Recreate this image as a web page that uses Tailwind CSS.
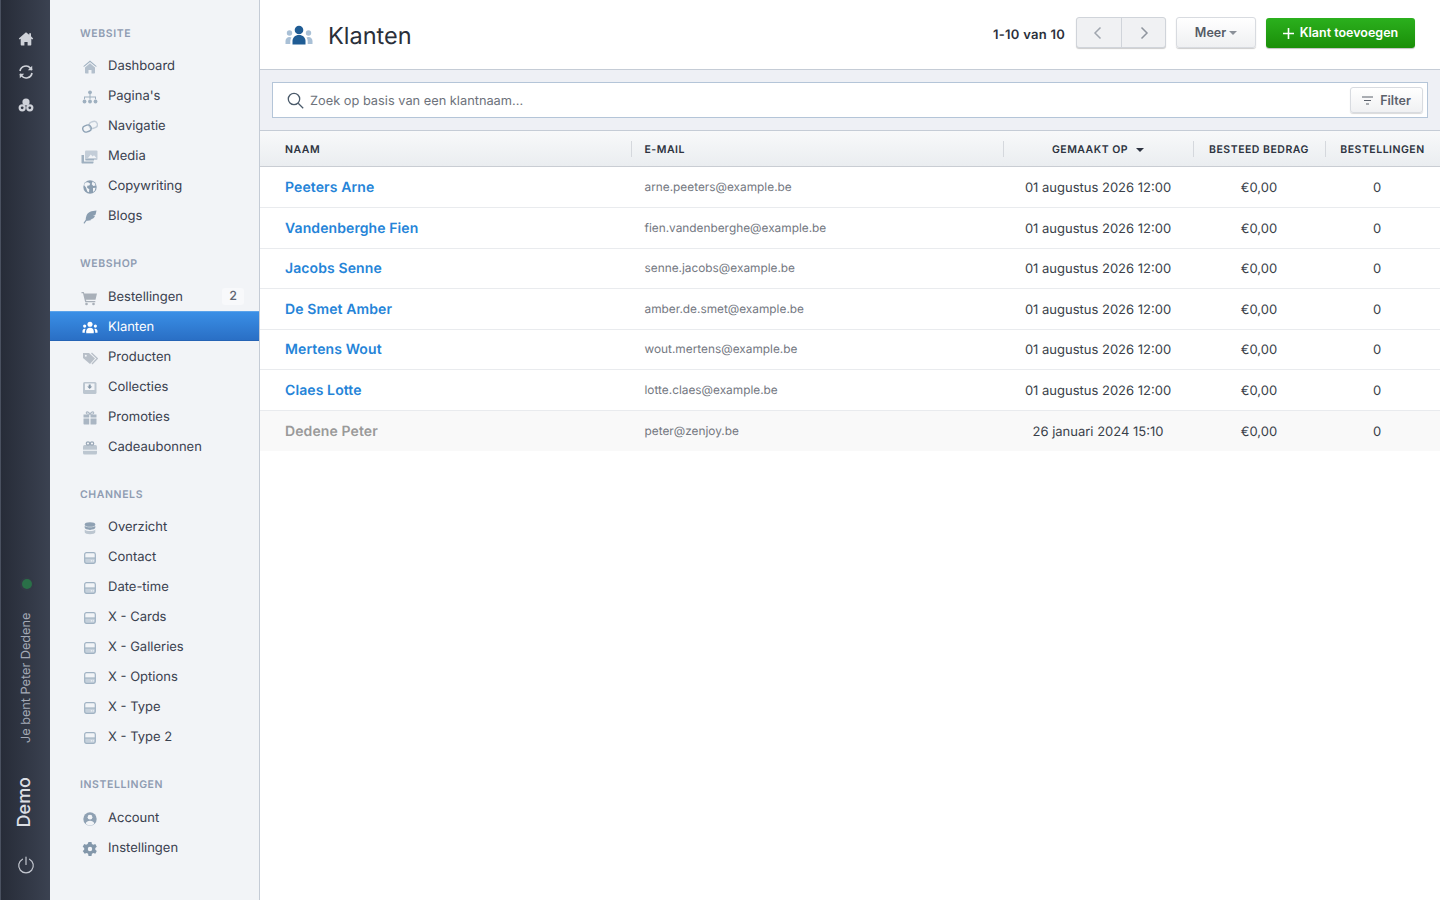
<!DOCTYPE html>
<html lang="nl">
<head>
    <meta charset="UTF-8">
    <meta name="viewport" content="width=device-width, initial-scale=1.0">
    <title>Klanten</title>
    <script src="https://cdn.jsdelivr.net/npm/@tailwindcss/browser@4"></script>
</head>
<body class="bg-white text-[#2d3748] font-['Inter',sans-serif] [text-rendering:geometricPrecision] h-[900px] w-[1440px] overflow-hidden flex">

<!-- iconen -->
<svg class="hidden">
    <symbol id="channel" viewBox="0 0 14 14">
        <rect x="1" y="7" width="12" height="6" fill="#c6d1dc"/>
        <rect x=".8" y=".8" width="12.400" height="12.400" rx="2" fill="none" stroke="#a0b2c3" stroke-width="1.400"/>
        <path d="M1 7h12" stroke="#a0b2c3" stroke-width="1.300"/>
        <rect x="8" y="9.500" width="1.200" height="1.600" fill="#f2f4f7"/>
        <rect x="10.200" y="9.500" width="1.200" height="1.600" fill="#f2f4f7"/>
    </symbol>
</svg>

<!-- RAIL -->
<div class="w-[50px] h-full flex flex-col items-center bg-gradient-to-r from-[#272c38] to-[#3b4251] border-l border-[#4a5160] shrink-0">
    <div class="flex flex-col items-center gap-[17px] pt-[31px] text-[#cfd2d9]">
        <svg class="w-4 h-4" viewBox="0 0 16 16" fill="currentColor"><path d="M8 1.200 .8 7.600l.9 1 1-.9v6.100c0 .4.3.7.7.7h3v-3.600h3.200v3.600h3c.4 0 .7-.3.7-.7V7.700l1 .9.9-1L13 5.300V2.200h-1.800v1.500z"/></svg>
        <svg class="w-4 h-4" viewBox="0 0 16 16" fill="none" stroke="currentColor" stroke-width="1.700"><path d="M2 7a6 6 0 0 1 10.500-2.800L14 5.800"/><path d="M14 9a6 6 0 0 1-10.500 2.800L2 10.200"/><path d="M14.200 1.800v4.400H9.800M1.800 14.200V9.800h4.400" fill="currentColor" stroke="none"/></svg>
        <svg class="w-4 h-4" viewBox="0 0 16 16" fill="currentColor"><circle cx="8" cy="5" r="3.600"/><circle cx="4.200" cy="10.800" r="3.600"/><circle cx="11.800" cy="10.800" r="3.600"/><circle cx="4.200" cy="10.800" r="1.400" fill="#343a47"/><circle cx="11.800" cy="10.800" r="1.400" fill="#343a47"/></svg>
    </div>
    <div class="flex-1"></div>
    <span class="w-[10px] h-[10px] rounded-full bg-[#2a7048] ring-2 ring-[#333a46] translate-x-px"></span>
    <div class="mt-[21px] h-[136px] flex justify-center text-[12.700px] leading-none text-[#a3a9b5] [writing-mode:vertical-rl] rotate-180 whitespace-nowrap translate-x-[2px]">Je bent Peter Dedene</div>
    <div class="mt-[31px] text-[18px] leading-none font-medium text-[#dcdfe4] [writing-mode:vertical-rl] rotate-180 -translate-x-px">Demo</div>
    <svg class="w-[18px] h-[18px] mt-[29px] mb-[26px] text-[#c3c7cf]" viewBox="0 0 18 18" fill="none" stroke="currentColor" stroke-width="1.200" stroke-linecap="round"><path d="M5.500 3.200a7.300 7.300 0 1 0 7 0"/><path d="M9 1v7.500"/></svg>
</div>

<!-- SIDEBAR -->
<aside class="w-[210px] h-full shrink-0 bg-[#f2f4f7] border-r border-[#c5ccd6] text-[13px] text-[#39404e]">
    <div class="h-[26px]"></div>
    <h3 class="h-[16px] leading-[16px] pl-[30px] text-[10.500px] font-semibold tracking-[0.6px] text-[#8f9cb2]">WEBSITE</h3>
    <ul class="mt-[8px] [&>li]:pt-[4px]">
        <li class="h-[30px] flex items-center"><span class="w-[58px] pl-[32px] flex"><svg class="w-4 h-4 text-[#9fb0c0]" viewBox="0 0 16 16"><path d="M8 1.500 1 7.500h1.500L8 3l5.500 4.500H15z" fill="currentColor"/><path d="M3 8.500 8 4.300l5 4.200v5.200c0 .4-.3.8-.8.800h-2.700V11h-3v3.500H3.800c-.5 0-.8-.4-.8-.8z" fill="#b4c0cd"/></svg></span>Dashboard</li>
        <li class="h-[30px] flex items-center"><span class="w-[58px] pl-[32px] flex"><svg class="w-4 h-4 text-[#9fb0c0]" viewBox="0 0 16 16" fill="currentColor"><circle cx="8" cy="3.300" r="1.900"/><circle cx="2.500" cy="12.500" r="1.900"/><circle cx="8" cy="12.500" r="1.900"/><circle cx="13.500" cy="12.500" r="1.900"/><path d="M7.500 5h1v2.500h5.500v2.800h-1V8.500H8.500v1.800h-1V8.500H3v1.800H2V7.500h5.500z"/></svg></span>Pagina's</li>
        <li class="h-[30px] flex items-center"><span class="w-[58px] pl-[32px] flex"><svg class="w-4 h-4 text-[#8fa3b6]" viewBox="0 0 16 16" fill="none" stroke="currentColor" stroke-width="1.400"><rect x="7" y="2.700" width="8.500" height="6.500" rx="3.250" transform="rotate(-20 11 6)" stroke="#c3cdd8"/><rect x=".7" y="6.300" width="8.500" height="6.500" rx="3.250" transform="rotate(-20 5 9.500)"/></svg></span>Navigatie</li>
        <li class="h-[30px] flex items-center"><span class="w-[58px] pl-[31px] flex"><svg class="w-[17px] h-4 text-[#9fb0c0]" viewBox="0 0 17 16" fill="currentColor"><rect x="4" y="1.500" width="12.500" height="9.500" rx="1" fill="#c3cdd8"/><path d="m7 9 2.800-3.500 1.800 2 1.400-1.300L15.500 9z" fill="#f2f4f7"/><path d="M.5 6h2.500v6.500h9.500v1c0 .6-.4 1-1 1h-10c-.6 0-1-.4-1-1zM4.500 10h8.500v1.500H4.500z"/></svg></span>Media</li>
        <li class="h-[30px] flex items-center"><span class="w-[58px] pl-[32px] flex"><svg class="w-4 h-4 text-[#8a9db0]" viewBox="0 0 16 16"><circle cx="8" cy="8" r="6.700" fill="currentColor"/><path d="M3.500 3.500 6 3.200l2.300 1.600-1 1.700-2 .2-.2 2 2.200 1.500-.3 3-1.700-.7-1.300-4L2 6zM10.500 2.500l2.300 1.700.8 2.300-2.300.4-1.600-1.600zM11 9l2.500-.3-.8 3-1.700 1.300z" fill="#f2f4f7"/></svg></span>Copywriting</li>
        <li class="h-[30px] flex items-center"><span class="w-[58px] pl-[32px] flex"><svg class="w-4 h-4 text-[#8a9db0]" viewBox="0 0 16 16" fill="currentColor"><path d="M14.500 1.500c-5 .3-8.500 1.500-10 5-.6 1.500-.8 3-.8 4.300L1.500 14l.8.700 2.300-3c1.500 0 3.500-.2 5.300-1l-1.800-.3 3-.9c1-.8 1.500-1.700 2-2.800l-2.200-.2 2.600-.8c.4-1.300.7-2.600 1-4.200z"/></svg></span>Blogs</li>
    </ul>

    <h3 class="mt-[26px] h-[16px] leading-[16px] pl-[30px] text-[10.500px] font-semibold tracking-[0.6px] text-[#8f9cb2]">WEBSHOP</h3>
    <ul class="mt-[9px] [&>li]:pt-[4px]">
        <li class="h-[30px] flex items-center"><span class="w-[58px] pl-[31px] flex"><svg class="w-4 h-4 text-[#a9b0b9]" viewBox="0 0 16 16" fill="currentColor"><path d="M.5 2h2.300l.5 1.500H16l-1.500 6.300H5l.3 1.200h9v1.300H4.200L2 3.300H.5z"/><circle cx="5.500" cy="14" r="1.300"/><circle cx="12.500" cy="14" r="1.300"/></svg></span>Bestellingen<span class="ml-auto mr-[15px] w-[22px] h-[17px] rounded-[3px] bg-[#f8f9fb] text-center text-[12.500px] leading-[17px] font-medium text-[#5f6673] -translate-y-[2px]">2</span></li>
        <li class="h-[30px] flex items-center text-white bg-gradient-to-b from-[#3a8fe6] to-[#2a6fc5] border-y border-[#2463b5] border-t-[#5ba3ea]"><span class="w-[58px] pl-[32px] flex"><svg class="w-4 h-4 text-white" viewBox="0 0 17 16" fill="currentColor"><circle cx="8.500" cy="4" r="2.700"/><path d="M4.500 13.500v-2c0-2 1.500-3.700 4-3.700s4 1.700 4 3.700v2z"/><circle cx="2.800" cy="6" r="1.700"/><circle cx="14.200" cy="6" r="1.700"/><path d="M.5 13v-1.800c0-1.300 1-2.400 2.300-2.400.4 0 .8.100 1 .2-.5.800-.8 1.600-.8 2.500V13zM16.500 13v-1.800c0-1.300-1-2.400-2.300-2.400-.4 0-.8.100-1 .2.500.8.800 1.600.8 2.500V13z"/></svg></span>Klanten</li>
        <li class="h-[30px] flex items-center"><span class="w-[58px] pl-[32px] flex"><svg class="w-4 h-4 text-[#a9b0b9]" viewBox="0 0 16 16"><path d="M1 3h6l6 5.500-5 5.500-7-6z" fill="#b8bfc8"/><path d="m9.500 3 5.800 5.500-5.300 5.500" fill="none" stroke="#b8bfc8" stroke-width="1.300"/><circle cx="3.800" cy="5.700" r="1" fill="#f2f4f7"/></svg></span>Producten</li>
        <li class="h-[30px] flex items-center"><span class="w-[58px] pl-[32px] flex"><svg class="w-4 h-4" viewBox="0 0 16 16"><rect x="1" y="2" width="13.500" height="12" rx="1.500" fill="#bcc6d0"/><rect x="3" y="3.500" width="9.500" height="6.500" fill="#f2f4f7"/><path d="M6.700 4.500h2v2h1.500L7.700 9 5.200 6.500h1.500z" fill="#8597a8"/></svg></span>Collecties</li>
        <li class="h-[30px] flex items-center"><span class="w-[58px] pl-[32px] flex"><svg class="w-4 h-4" viewBox="0 0 16 16" fill="#aab6c3"><path d="M1.500 8.500h5.700V14.500H2.500c-.6 0-1-.4-1-1zM8.500 8.500h6v5c0 .6-.4 1-1 1h-5zM1.500 4.500h5.700v3H1.500zM8.500 4.500h6v3h-6z"/><path d="M8 4.300C6.500 1 3.500 1.300 4.500 3.500c.3.500 2 .8 3.500.8zm0 0c1.500-3.300 4.500-3 3.500-.8-.3.500-2 .8-3.500.8z" fill="none" stroke="#aab6c3" stroke-width="1.100"/></svg></span>Promoties</li>
        <li class="h-[30px] flex items-center"><span class="w-[58px] pl-[32px] flex"><svg class="w-4 h-4" viewBox="0 0 16 16"><rect x="1" y="5" width="14" height="9.500" rx="1.500" fill="#bcc6d0"/><rect x="1" y="9.700" width="14" height="1.100" fill="#f2f4f7"/><circle cx="6" cy="3.500" r="1.700" fill="none" stroke="#9aa8b7" stroke-width="1.200"/><circle cx="10" cy="3.500" r="1.700" fill="none" stroke="#9aa8b7" stroke-width="1.200"/></svg></span>Cadeaubonnen</li>
    </ul>

    <h3 class="mt-[26px] h-[16px] leading-[16px] pl-[30px] text-[10.500px] font-semibold tracking-[0.6px] text-[#8f9cb2]">CHANNELS</h3>
    <ul class="mt-[8px] [&>li]:pt-[4px]">
        <li class="h-[30px] flex items-center"><span class="w-[58px] pl-[34px] flex"><svg class="w-[12px] h-[13px] text-[#8fa1b3]" viewBox="0 0 14 16" fill="currentColor"><ellipse cx="7" cy="3" rx="6.500" ry="2.800"/><path d="M.5 4.700C1.500 6 4.500 6.500 7 6.500s5.500-.5 6.500-1.800v2.500C13.500 8.600 10.300 9.700 7 9.700S.5 8.600.5 7.200z"/><path d="M.5 9.200c1 1.300 4 1.800 6.500 1.800s5.500-.5 6.500-1.800v3.300c0 1.400-3.200 2.500-6.500 2.500s-6.500-1.100-6.500-2.500z" fill="#bcc6d0"/></svg></span>Overzicht</li>
        <li class="h-[30px] flex items-center"><span class="w-[58px] pl-[34px] flex"><svg class="w-[12px] h-[12px]"><use href="#channel"/></svg></span>Contact</li>
        <li class="h-[30px] flex items-center"><span class="w-[58px] pl-[34px] flex"><svg class="w-[12px] h-[12px]"><use href="#channel"/></svg></span>Date-time</li>
        <li class="h-[30px] flex items-center"><span class="w-[58px] pl-[34px] flex"><svg class="w-[12px] h-[12px]"><use href="#channel"/></svg></span>X - Cards</li>
        <li class="h-[30px] flex items-center"><span class="w-[58px] pl-[34px] flex"><svg class="w-[12px] h-[12px]"><use href="#channel"/></svg></span>X - Galleries</li>
        <li class="h-[30px] flex items-center"><span class="w-[58px] pl-[34px] flex"><svg class="w-[12px] h-[12px]"><use href="#channel"/></svg></span>X - Options</li>
        <li class="h-[30px] flex items-center"><span class="w-[58px] pl-[34px] flex"><svg class="w-[12px] h-[12px]"><use href="#channel"/></svg></span>X - Type</li>
        <li class="h-[30px] flex items-center"><span class="w-[58px] pl-[34px] flex"><svg class="w-[12px] h-[12px]"><use href="#channel"/></svg></span>X - Type 2</li>
    </ul>

    <h3 class="mt-[26px] h-[16px] leading-[16px] pl-[30px] text-[10.500px] font-semibold tracking-[0.6px] text-[#8f9cb2]">INSTELLINGEN</h3>
    <ul class="mt-[9px] [&>li]:pt-[4px]">
        <li class="h-[30px] flex items-center"><span class="w-[58px] pl-[32px] flex"><svg class="w-4 h-4" viewBox="0 0 16 16"><circle cx="8" cy="8" r="6.700" fill="#8fa1b3"/><circle cx="8" cy="6.200" r="2.400" fill="#f2f4f7"/><path d="M3.700 12.500c.5-1.800 2.300-2.800 4.300-2.800s3.800 1 4.300 2.800C11 13.900 9.500 14.500 8 14.500s-3-.6-4.300-2z" fill="#f2f4f7"/></svg></span>Account</li>
        <li class="h-[30px] flex items-center"><span class="w-[58px] pl-[32px] flex"><svg class="w-4 h-4 text-[#8397aa]" viewBox="0 0 16 16" fill="currentColor"><path fill-rule="evenodd" d="M6.500 1h3l.4 2 1.500.8 1.900-.7 1.500 2.600-1.500 1.300v1.800l1.500 1.300-1.500 2.600-1.900-.7-1.500.8-.4 2.200h-3l-.4-2.200-1.500-.8-1.900.7L.7 10.100l1.500-1.300V7L.7 5.700l1.500-2.600 1.900.7L5.600 3zM8 5.800a2.200 2.200 0 1 0 0 4.400 2.200 2.200 0 0 0 0-4.400z"/></svg></span>Instellingen</li>
    </ul>
</aside>

<!-- MAIN -->
<main class="flex-1 min-w-0 flex flex-col">
    <header class="h-[70px] shrink-0 flex items-center pl-[25px] pr-[25px] border-b border-[#c5ccd6]">
        <svg class="w-[28px] h-[22px] mr-[15px]" viewBox="0 0 28 22"><circle cx="14" cy="6" r="4.300" fill="#1f5c94"/><path d="M7.500 20.500v-3.500c0-3.300 2.500-6 6.500-6s6.500 2.700 6.500 6v3.500z" fill="#1f5c94"/><circle cx="4.500" cy="9" r="2.700" fill="#a9c0d6"/><circle cx="23.500" cy="9" r="2.700" fill="#a9c0d6"/><path d="M.5 20v-3c0-2.200 1.700-4 4-4 .8 0 1.500.2 2 .5-.8 1.200-1.200 2.500-1.200 3.800V20zM27.500 20v-3c0-2.200-1.700-4-4-4-.8 0-1.500.2-2 .5.800 1.200 1.200 2.500 1.200 3.800V20z" fill="#a9c0d6"/></svg>
        <h1 class="text-[23.500px] font-normal text-[#2a2f3a] leading-none translate-y-px">Klanten</h1>
        <span class="ml-auto mr-[11px] pt-[2px] text-[13px] tracking-[0.25px] font-semibold text-[#2b303b]">1-10 van 10</span>
        <div class="flex h-[31px] w-[90px] rounded-[3px] border border-[#d0d4da] bg-[#f0f1f3] shadow-[0_1px_1px_rgba(0,0,0,0.2)] -mt-[4px]">
            <button class="flex-1 flex items-center justify-center border-r border-[#d0d4da] pr-[2px]"><svg class="w-[10px] h-[14px] text-[#a0a6ae]" viewBox="0 0 10 14" fill="none" stroke="currentColor" stroke-width="1.500"><path d="M7.500 1.500 2 7l5.500 5.500"/></svg></button>
            <button class="flex-1 flex items-center justify-center pl-[2px]"><svg class="w-[10px] h-[14px] text-[#8f959e]" viewBox="0 0 10 14" fill="none" stroke="currentColor" stroke-width="1.500"><path d="M2.500 1.500 8 7l-5.500 5.500"/></svg></button>
        </div>
        <button class="ml-[10px] -mt-[4px] w-[80px] h-[31px] pt-px flex items-center justify-center gap-[3px] rounded-[3px] border border-[#d8dbe0] bg-gradient-to-b from-white to-[#eff0f2] shadow-[0_1px_1px_rgba(0,0,0,0.2)] text-[12.500px] font-semibold text-[#555b65]">Meer<span class="w-0 h-0 border-x-[4px] border-x-transparent border-t-[4px] border-t-[#8a9098] mb-px"></span></button>
        <button class="ml-[10px] -mt-[4px] w-[149px] h-[30px] pt-px flex items-center justify-center gap-[6px] rounded-[3px] bg-gradient-to-b from-[#2bb01d] to-[#1a8f07] shadow-[0_1px_1px_rgba(0,0,0,0.25)] text-[12.500px] font-semibold text-white"><svg class="w-[11px] h-[11px]" viewBox="0 0 11 11" fill="none" stroke="currentColor" stroke-width="1.600"><path d="M5.500 0v11M0 5.500h11"/></svg>Klant toevoegen</button>
    </header>

    <div class="h-[61px] shrink-0 px-[12px] pt-[12px] bg-[#eef0f5] border-b border-[#c5ccd6]">
        <div class="h-[36px] flex items-center bg-white border border-[#b4c5d8] pl-[14px] pr-[4px]">
            <svg class="w-[17px] h-[17px] text-[#4a5a6a] mr-[6px]" viewBox="0 0 17 17" fill="none" stroke="currentColor" stroke-width="1.300"><circle cx="7" cy="7" r="5.700"/><path d="m11.200 11.200 5 5"/></svg>
            <span class="text-[12.800px] pt-[3px] text-[#6d727b]">Zoek op basis van een klantnaam...</span>
            <button class="ml-auto w-[73px] h-[26px] pt-[3px] flex items-center justify-center gap-[7px] rounded-[3px] border border-[#d8dbe0] bg-gradient-to-b from-white to-[#f0f1f3] shadow-[0_1px_1px_rgba(0,0,0,0.15)] text-[12.500px] font-semibold text-[#5b616b]"><svg class="w-[11px] h-[9px] -mt-[2px]" viewBox="0 0 11 9" fill="none" stroke="#5b616b" stroke-width="1.100"><path d="M0 1h11M2 4.500h7M4 8h3"/></svg>Filter</button>
        </div>
    </div>

    <table class="w-full table-fixed border-separate border-spacing-0">
        <colgroup><col class="w-[371px]"><col class="w-[372px]"><col class="w-[190px]"><col class="w-[132px]"><col></colgroup>
        <thead>
            <tr class="bg-gradient-to-b from-[#f8f9fa] to-[#eaedf0] text-[10.500px] tracking-[0.5px] text-[#2d3340]">
                <th class="h-[36px] pt-[3px] border-b border-[#c9cdd3] pl-[25px] text-left font-semibold">NAAM</th>
                <th class="relative pt-[3px] border-b border-[#c9cdd3] pl-[13.500px] text-left font-semibold"><span class="absolute left-0 top-[10px] h-4 w-px bg-[#d5d8dd]"></span>E-MAIL</th>
                <th class="relative pt-[3px] border-b border-[#c9cdd3] text-center font-semibold"><span class="absolute left-0 top-[10px] h-4 w-px bg-[#d5d8dd]"></span>GEMAAKT OP<span class="inline-block ml-[8px] w-0 h-0 align-middle border-x-[4px] border-x-transparent border-t-[4px] border-t-[#2d3340]"></span></th>
                <th class="relative pt-[3px] border-b border-[#c9cdd3] text-center font-semibold"><span class="absolute left-0 top-[10px] h-4 w-px bg-[#d5d8dd]"></span>BESTEED BEDRAG</th>
                <th class="relative pt-[3px] border-b border-[#c9cdd3] text-center font-semibold"><span class="absolute left-0 top-[10px] h-4 w-px bg-[#d5d8dd]"></span>BESTELLINGEN</th>
            </tr>
        </thead>
        <tbody class="text-[13px] text-[#3a3f49] [&_td]:h-[40.500px] [&_td]:border-b [&_td]:border-[#e9ebee] [&_tr:first-child_td]:h-[41px] [&_tr:last-child_td]:border-b-0">
            <tr><td class="pt-px pl-[25px] text-[14px] tracking-[0.1px] font-semibold text-[#2584d8]">Peeters Arne</td><td class="pt-[2px] pl-[13.500px] text-[11.850px] text-[#73777f]">arne.peeters@example.be</td><td class="pt-[3px] text-center">01 augustus 2026 12:00</td><td class="pt-[3px] text-center">€0,00</td><td class="pt-[3px] text-center pr-[11px]">0</td></tr>
            <tr><td class="pt-px pl-[25px] text-[14px] tracking-[0.1px] font-semibold text-[#2584d8]">Vandenberghe Fien</td><td class="pt-[2px] pl-[13.500px] text-[11.850px] text-[#73777f]">fien.vandenberghe@example.be</td><td class="pt-[3px] text-center">01 augustus 2026 12:00</td><td class="pt-[3px] text-center">€0,00</td><td class="pt-[3px] text-center pr-[11px]">0</td></tr>
            <tr><td class="pt-px pl-[25px] text-[14px] tracking-[0.1px] font-semibold text-[#2584d8]">Jacobs Senne</td><td class="pt-[2px] pl-[13.500px] text-[11.850px] text-[#73777f]">senne.jacobs@example.be</td><td class="pt-[3px] text-center">01 augustus 2026 12:00</td><td class="pt-[3px] text-center">€0,00</td><td class="pt-[3px] text-center pr-[11px]">0</td></tr>
            <tr><td class="pt-px pl-[25px] text-[14px] tracking-[0.1px] font-semibold text-[#2584d8]">De Smet Amber</td><td class="pt-[2px] pl-[13.500px] text-[11.850px] text-[#73777f]">amber.de.smet@example.be</td><td class="pt-[3px] text-center">01 augustus 2026 12:00</td><td class="pt-[3px] text-center">€0,00</td><td class="pt-[3px] text-center pr-[11px]">0</td></tr>
            <tr><td class="pt-px pl-[25px] text-[14px] tracking-[0.1px] font-semibold text-[#2584d8]">Mertens Wout</td><td class="pt-[2px] pl-[13.500px] text-[11.850px] text-[#73777f]">wout.mertens@example.be</td><td class="pt-[3px] text-center">01 augustus 2026 12:00</td><td class="pt-[3px] text-center">€0,00</td><td class="pt-[3px] text-center pr-[11px]">0</td></tr>
            <tr><td class="pt-px pl-[25px] text-[14px] tracking-[0.1px] font-semibold text-[#2584d8]">Claes Lotte</td><td class="pt-[2px] pl-[13.500px] text-[11.850px] text-[#73777f]">lotte.claes@example.be</td><td class="pt-[3px] text-center">01 augustus 2026 12:00</td><td class="pt-[3px] text-center">€0,00</td><td class="pt-[3px] text-center pr-[11px]">0</td></tr>
            <tr class="bg-[#f9f9f9]"><td class="pt-px pl-[25px] text-[14px] tracking-[0.1px] font-semibold text-[#9a9a9a]">Dedene Peter</td><td class="pt-[2px] pl-[13.500px] text-[11.850px] text-[#73777f]">peter@zenjoy.be</td><td class="pt-[3px] text-center">26 januari 2024 15:10</td><td class="pt-[3px] text-center">€0,00</td><td class="pt-[3px] text-center pr-[11px]">0</td></tr>
        </tbody>
    </table>
</main>
</body>
</html>
